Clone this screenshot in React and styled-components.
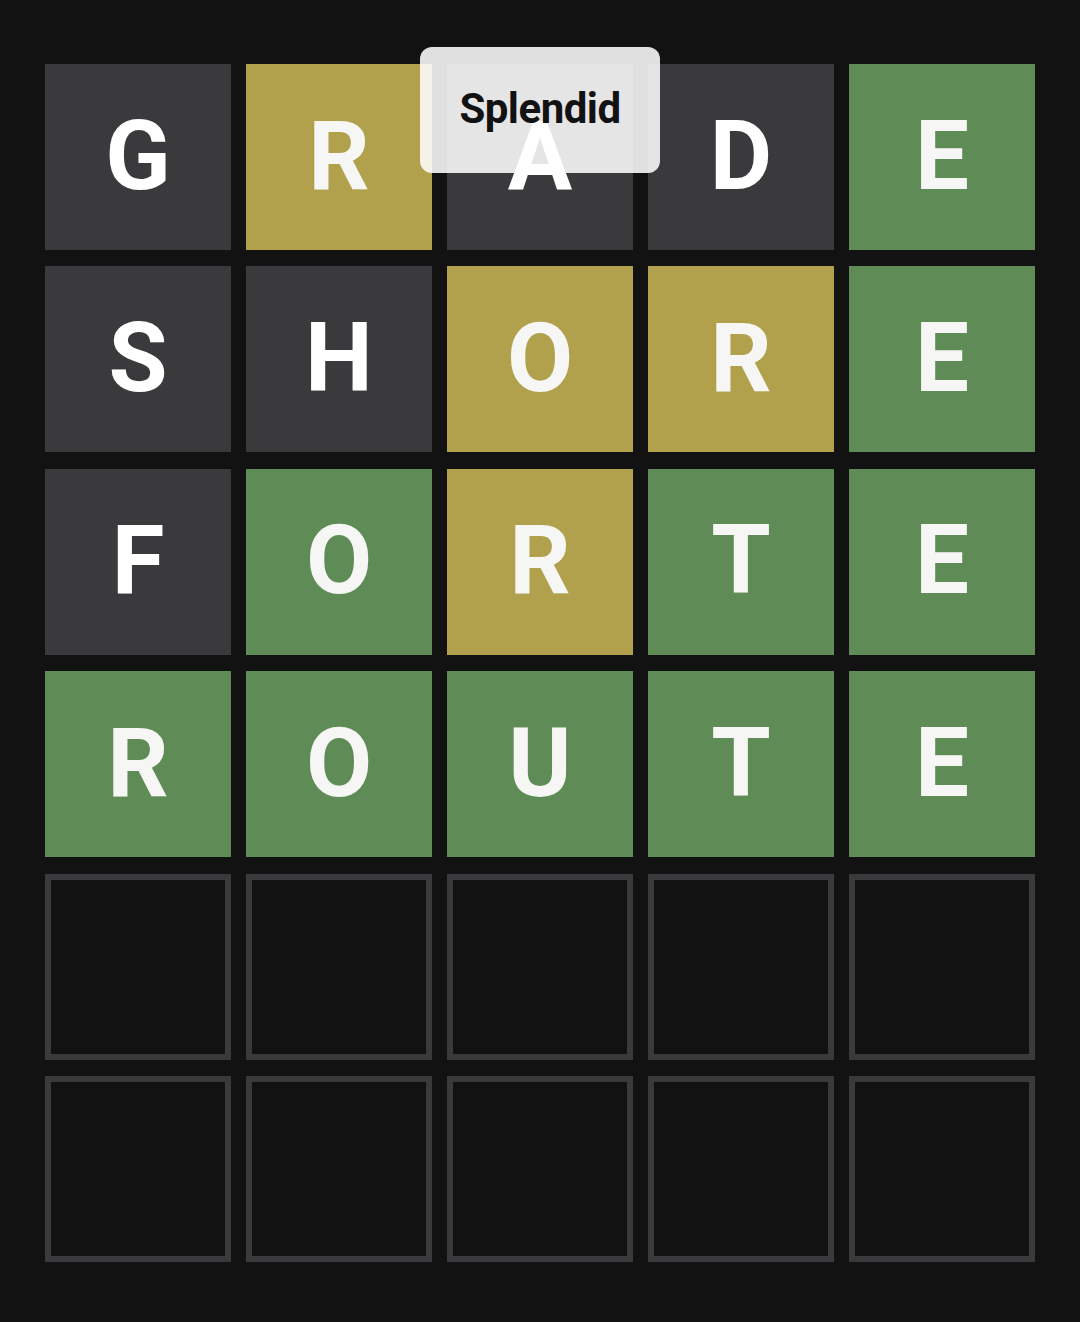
import React from "react";
import styled, { createGlobalStyle } from "styled-components";

const GlobalStyle = createGlobalStyle`
  html, body {
    margin: 0;
    padding: 0;
    background: #121213;
  }
`;

const tileColors = {
  absent: "#3a3a3c",
  present: "#b1a04c",
  correct: "#5f8c56",
};

const Page = styled.div`
  position: relative;
  width: 1080px;
  height: 1322px;
  box-sizing: border-box;
  padding: 64px 45px 60px;
  background: #121213;
  font-family: Roboto, "Liberation Sans", sans-serif;
`;

const Board = styled.div`
  display: grid;
  grid-template-columns: repeat(5, 186px);
  grid-template-rows: repeat(6, 186px);
  column-gap: 15px;
  row-gap: 16.4px;
`;

const Tile = styled.div`
  box-sizing: border-box;
  display: flex;
  align-items: center;
  justify-content: center;
  background: ${({ state }) => (state ? tileColors[state] : "transparent")};
  border: ${({ state }) => (state ? "none" : "6px solid #3a3a3c")};
  color: ${({ state }) => (state === "absent" ? "#ffffff" : "#f6f6f4")};
  font-size: 96px;
  font-weight: 700;
  line-height: 1;
  text-transform: uppercase;
  padding-bottom: 3px;
`;

const Toast = styled.div`
  position: absolute;
  top: 47px;
  left: 50%;
  transform: translateX(-50%);
  width: 240px;
  height: 126px;
  box-sizing: border-box;
  display: flex;
  align-items: center;
  justify-content: center;
  padding-bottom: 4px;
  background: rgba(255, 255, 255, 0.87);
  border-radius: 12px;
  color: #121213;
  font-size: 42px;
  font-weight: 700;
  letter-spacing: -0.5px;
`;

const guesses = [
  { word: "grade", marks: ["absent", "present", "absent", "absent", "correct"] },
  { word: "shore", marks: ["absent", "absent", "present", "present", "correct"] },
  { word: "forte", marks: ["absent", "correct", "present", "correct", "correct"] },
  { word: "route", marks: ["correct", "correct", "correct", "correct", "correct"] },
];

const App = () => {
  const rows = [...guesses, null, null];

  return (
    <>
      <GlobalStyle />
      <Page>
        <Board>
          {rows.map((row, r) =>
            [0, 1, 2, 3, 4].map((c) => (
              <Tile key={`${r}-${c}`} state={row ? row.marks[c] : null}>
                {row ? row.word[c] : ""}
              </Tile>
            ))
          )}
        </Board>
        <Toast>Splendid</Toast>
      </Page>
    </>
  );
};

export default App;
